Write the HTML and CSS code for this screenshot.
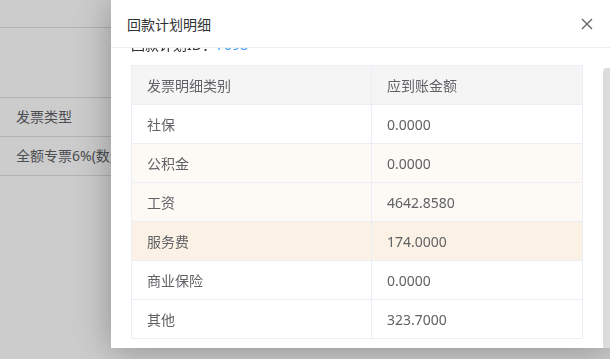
FILE: index.html
```html
<!DOCTYPE html>
<html lang="zh-CN">
<head>
    <meta charset="UTF-8">
    <meta name="viewport" content="width=device-width, initial-scale=1.0">
    <title>回款计划明细</title>
    <link rel="stylesheet" href="styles.css">
</head>
<body>
    <!-- page behind the dialog -->
    <div class="page">
        <div class="page-top"></div>
        <div class="page-gap"></div>
        <div class="page-row">发票类型</div>
        <div class="page-row">全额专票6%(数量)</div>
    </div>
    <div class="mask"></div>

    <div class="dialog">
        <div class="dialog-header">
            <span class="dialog-title">回款计划明细</span>
            <svg class="dialog-close" width="12" height="12" viewBox="0 0 12 12">
                <path d="M1 1 L11 11 M11 1 L1 11" stroke="#606266" stroke-width="1.3" fill="none"/>
            </svg>
        </div>
        <div class="dialog-body">
            <div class="plan-id">回款计划ID：<span class="plan-no">7098</span></div>
            <table class="detail-table">
                <thead>
                    <tr><th>发票明细类别</th><th>应到账金额</th></tr>
                </thead>
                <tbody>
                    <tr><td>社保</td><td>0.0000</td></tr>
                    <tr class="striped"><td>公积金</td><td>0.0000</td></tr>
                    <tr class="striped"><td>工资</td><td>4642.8580</td></tr>
                    <tr class="hover"><td>服务费</td><td>174.0000</td></tr>
                    <tr><td>商业保险</td><td>0.0000</td></tr>
                    <tr><td>其他</td><td>323.7000</td></tr>
                </tbody>
            </table>
            <div class="scroll-thumb"></div>
        </div>
    </div>
</body>
</html>
```

FILE: styles.css
```css
body {
    margin: 0;
    font-family: "Noto Sans", "Noto Sans CJK SC", sans-serif;
    font-size: 14px;
    color: #606266;
    background-color: #fff;
    overflow: hidden;
}
.page {
    width: 610px;
}
.page-top {
    height: 27px;
    border-bottom: 1px solid #dcdfe6;
}
.page-gap {
    height: 69px;
    border-bottom: 1px solid #dcdfe6;
}
.page-row {
    height: 38px;
    line-height: 38px;
    padding-left: 16px;
    border-bottom: 1px solid #dcdfe6;
    color: #606266;
    white-space: nowrap;
}
.mask {
    position: fixed;
    top: 0;
    left: 0;
    right: 0;
    bottom: 0;
    background-color: rgba(0,0,0,0.2);
}
.dialog {
    position: absolute;
    top: 0;
    left: 111px;
    width: 499px;
    height: 348px;
    background-color: #fff;
    box-shadow: 0 2px 34px rgba(0,0,0,0.3);
    display: flex;
    flex-direction: column;
}
.dialog-header {
    height: 48px;
    flex-shrink: 0;
    border-bottom: 1px solid #ebeef5;
    display: flex;
    align-items: center;
    justify-content: space-between;
    padding: 0 16px;
    box-sizing: border-box;
    position: relative;
    z-index: 1;
    background-color: #fff;
}
.dialog-title {
    color: #303133;
    font-size: 14px;
}
.dialog-close {
    margin-right: 1px;
}
.dialog-body {
    flex: 1;
    overflow: hidden;
    position: relative;
    padding: 0 27px 0 20px;
}
.plan-id {
    margin-top: -13px;
    line-height: 20px;
    margin-bottom: 10px;
    color: #303133;
}
.plan-no {
    color: #409eff;
}
.detail-table {
    width: 452px;
    border-collapse: collapse;
    border: 1px solid #ebeef5;
}
.detail-table th,
.detail-table td {
    height: 38px;
    padding: 0 0 0 15px;
    text-align: left;
    font-weight: normal;
    border-bottom: 1px solid #ebeef5;
    border-right: 1px solid #ebeef5;
    color: #606266;
}
.detail-table th {
    background-color: #f5f5f5;
}
.detail-table th:first-child,
.detail-table td:first-child {
    width: 224px;
}
.detail-table tr.striped td {
    background-color: #fdfaf6;
}
.detail-table tr.hover td {
    background-color: #fcf1e5;
}
.scroll-thumb {
    position: absolute;
    top: 20px;
    right: 0;
    width: 7px;
    bottom: -6px;
    background-color: #dcdcdc;
    border-radius: 4px 0 0 0;
}
```
